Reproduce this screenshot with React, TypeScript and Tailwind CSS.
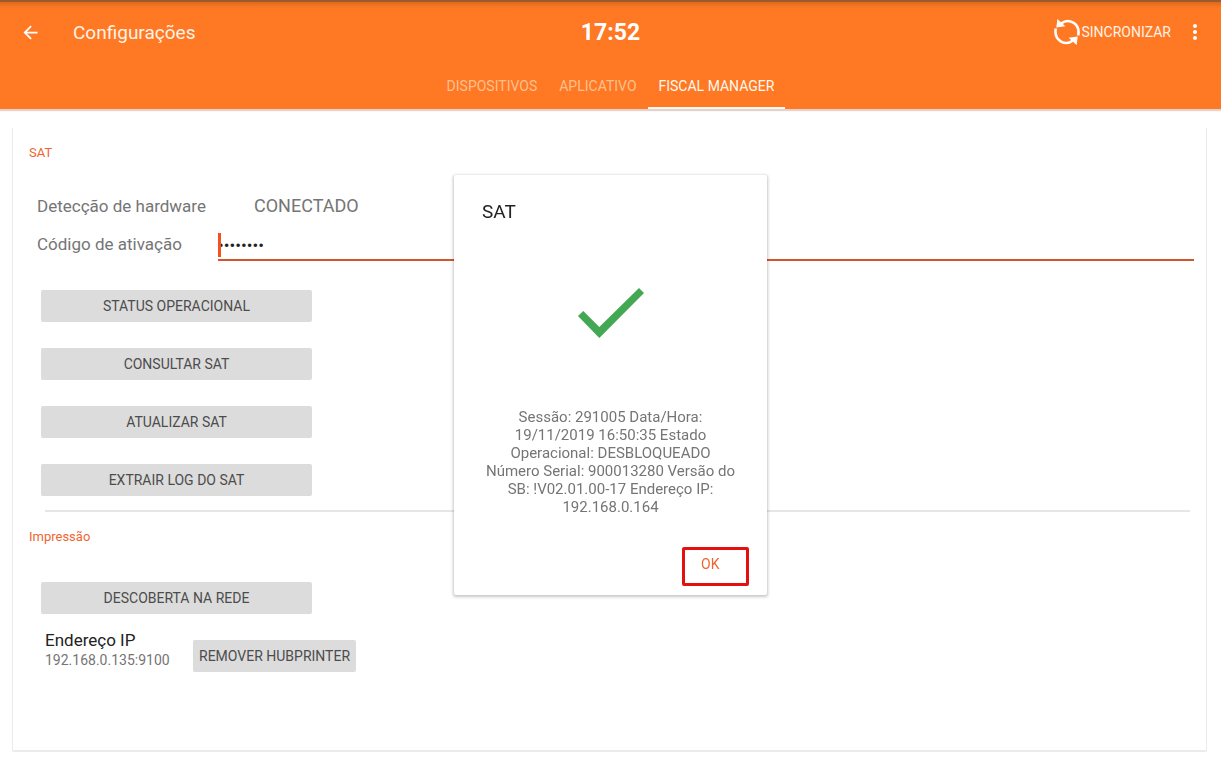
import React, { useState } from "react";
import { MdArrowBack, MdMoreVert } from "react-icons/md";

interface ActionButtonProps {
	label: string;
	className?: string;
}

const tabs = ["DISPOSITIVOS", "APLICATIVO", "FISCAL MANAGER"];

const satActions = [
	"STATUS OPERACIONAL",
	"CONSULTAR SAT",
	"ATUALIZAR SAT",
	"EXTRAIR LOG DO SAT",
];

const ActionButton = ({ label, className = "w-[271px]" }: ActionButtonProps) => (
	<button
		type="button"
		className={`h-8 rounded-xs bg-[#dcdcdc] text-[14px] text-[#4c4c4c] ${className}`}
	>
		{label}
	</button>
);

const SyncIcon = () => (
	<svg width="26" height="26" viewBox="0 0 26 26" aria-hidden="true">
		<g fill="none" stroke="#fff" strokeWidth="2.6">
			<path d="M7.5 4.2C14.5-1 26.5 4 24.2 16.6" />
			<path d="M18.5 21.8C11.5 27-.5 22 1.8 9.4" />
		</g>
		<path d="M3.4 0L2.3 8.4L11.4 7.2Z" fill="#fff" />
		<path d="M22.6 26L23.7 17.6L14.6 18.8Z" fill="#fff" />
	</svg>
);

const Header = () => {
	const [activeTab, setActiveTab] = useState("FISCAL MANAGER");

	return (
		<header className="bg-[#ff7824] text-white border-t-2 border-[#9b5a30] shadow-[0_2px_1px_#e3d3cc]">
			<div className="h-1.5 bg-linear-to-b from-[#e06a18] to-[#ff7824]" />
			<div className="grid grid-cols-3 items-center h-12 px-3.5">
				<div className="flex items-center gap-8 pl-1.5">
					<button type="button" aria-label="Voltar">
						<MdArrowBack size={21} />
					</button>
					<h1 className="pt-0.5 text-[19px] leading-6 text-[#fff3e6]">
						Configurações
					</h1>
				</div>
				<time className="pt-0.5 text-center text-[23px] leading-6 font-bold">
					17:52
				</time>
				<div className="flex items-center justify-end gap-3">
					<button
						type="button"
						className="flex items-center gap-px text-[14px] text-[#fff3e6]"
					>
						<SyncIcon />
						SINCRONIZAR
					</button>
					<button type="button" aria-label="Mais opções">
						<MdMoreVert size={24} />
					</button>
				</div>
			</div>
			<nav className="flex justify-center h-[53px] pt-2">
				{tabs.map((tab) => (
					<button
						key={tab}
						type="button"
						onClick={() => setActiveTab(tab)}
						className={`px-[11px] pt-0.5 text-[14px] border-b-2 ${
							tab === activeTab
								? "border-[#fff8ee] text-[#fff8ee]"
								: "border-transparent text-[#ffc08f]"
						}`}
					>
						{tab}
					</button>
				))}
			</nav>
		</header>
	);
};

const SatSection = () => (
	<section>
		<h2 className="text-[13px] leading-4 text-[#f0652f] pl-4">SAT</h2>
		<div className="flex items-baseline h-10 mt-6 pt-[9px] pl-6 text-[17px] leading-6 text-[#757575]">
			<span className="w-[217px]">Detecção de hardware</span>
			<span className="text-[18px]">CONECTADO</span>
		</div>
		<div className="flex pl-6 pr-3">
			<label
				htmlFor="activation-code"
				className="w-[181px] pt-[7px] text-[17px] leading-6 text-[#757575]"
			>
				Código de ativação
			</label>
			<div className="relative flex-1">
				<input
					id="activation-code"
					type="password"
					defaultValue="12345678"
					className="w-full h-9 pt-1.5 border-b-2 border-[#d4552b] text-[17px] text-[#222] outline-none"
				/>
				<span className="absolute left-0 top-2 w-[3px] h-6 bg-[#f4511e]" />
			</div>
		</div>
		<div className="flex flex-col items-start gap-[26px] mt-[29px] pl-7">
			{satActions.map((action) => (
				<ActionButton key={action} label={action} />
			))}
		</div>
	</section>
);

const PrintSection = () => (
	<section>
		<h2 className="text-[13px] leading-4 text-[#f0652f] pl-4">Impressão</h2>
		<div className="mt-[37px] pl-7">
			<ActionButton label="DESCOBERTA NA REDE" />
		</div>
		<div className="flex items-start mt-4 pl-8">
			<div className="w-[148px]">
				<p className="text-[17px] leading-5 text-[#222]">Endereço IP</p>
				<p className="text-[14px] leading-5 text-[#757575]">192.168.0.135:9100</p>
			</div>
			<ActionButton label="REMOVER HUBPRINTER" className="px-1.5 mt-2.5" />
		</div>
	</section>
);

const SatDialog = ({ onClose }: { onClose: () => void }) => (
	<div className="fixed inset-0 flex items-center justify-center pt-[3px]">
		<div
			role="dialog"
			aria-labelledby="dialog-title"
			className="w-[313px] rounded-xs bg-white pt-[23px] pb-[9px] shadow-[0_1px_3px_1px_rgba(0,0,0,0.22)]"
		>
			<h2 id="dialog-title" className="pl-7 text-[19px] leading-7 text-[#222]">
				SAT
			</h2>
			<svg
				width="66"
				height="50"
				viewBox="0 0 66 50"
				className="mx-auto mt-[62px]"
				aria-hidden="true"
			>
				<path d="M0 28L5.3 23L21.3 39L61 0L66 5L21.3 50Z" fill="#43a853" />
			</svg>
			<p className="mt-[70px] px-6 text-center text-[15px] leading-[18px] text-[#757575]">
				Sessão: 291005 Data/Hora:
				<br />
				19/11/2019 16:50:35 Estado
				<br />
				Operacional: DESBLOQUEADO
				<br />
				Número Serial: 900013280 Versão do
				<br />
				SB: !V02.01.00-17 Endereço IP:
				<br />
				192.168.0.164
			</p>
			<div className="flex justify-end mt-[31px] pr-[18px]">
				<button
					type="button"
					onClick={onClose}
					className="w-[67px] h-[39px] pl-4 pb-1 border-3 border-[#e60f0f] rounded-xs text-left text-[14px] text-[#f0652f]"
				>
					OK
				</button>
			</div>
		</div>
	</div>
);

const App = () => {
	const [dialogOpen, setDialogOpen] = useState(true);

	return (
		<div className="min-h-screen flex flex-col bg-white font-['Roboto',sans-serif]">
			<Header />
			<main className="flex-1 flex flex-col mt-[19px] ml-3 mr-3.5 mb-[15px] pt-[17px] border-x border-b-2 border-[#ebebeb] rounded-b-xs">
				<SatSection />
				<hr className="ml-8 mr-4 mt-3.5 mb-[17px] border-t-2 border-[#e6e6e6]" />
				<PrintSection />
			</main>
			{dialogOpen && <SatDialog onClose={() => setDialogOpen(false)} />}
		</div>
	);
};

export default App;
